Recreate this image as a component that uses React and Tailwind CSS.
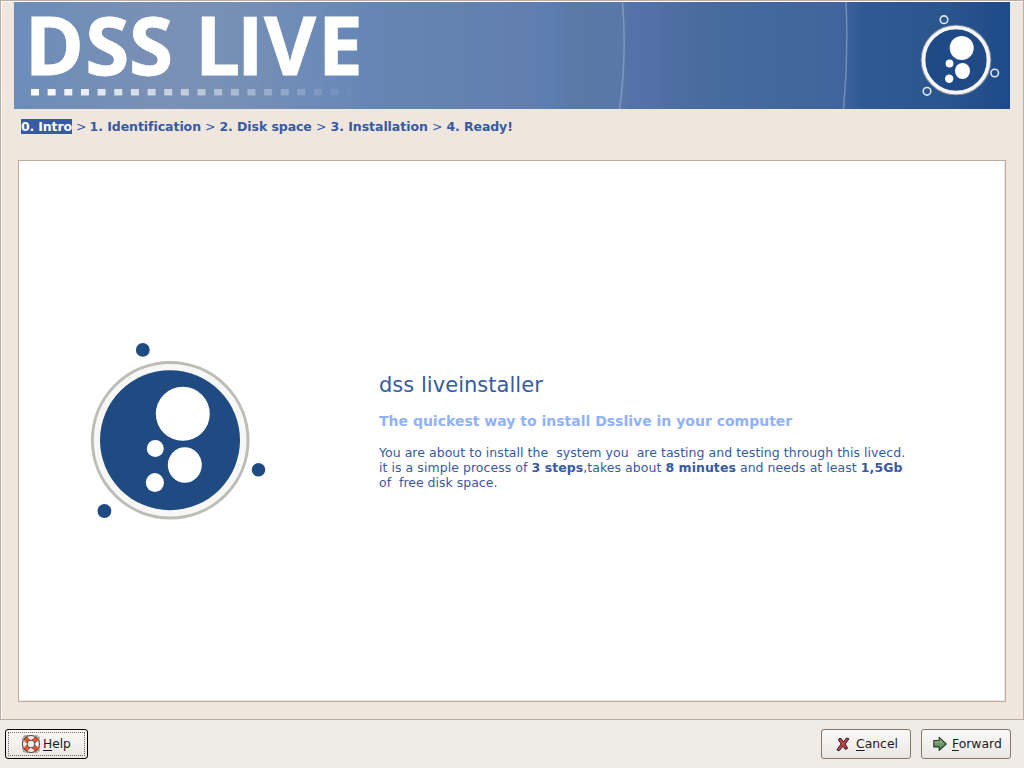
const squares = Array.from({ length: 20 }, (_, i) => i);

function Banner() {
  return (
    <svg className="block h-[107px] w-[996px] shrink-0 overflow-visible" viewBox="14 2 996 107">
      <defs>
        <linearGradient id="sky" gradientUnits="userSpaceOnUse" x1="14" y1="0" x2="1010" y2="0">
          <stop offset="0" stopColor="#6c8dba" />
          <stop offset="0.06" stopColor="#718eb7" />
          <stop offset="0.15" stopColor="#7b90b5" />
          <stop offset="0.22" stopColor="#7690b5" />
          <stop offset="0.31" stopColor="#6c8ab8" />
          <stop offset="0.36" stopColor="#6586b4" />
          <stop offset="0.42" stopColor="#6384af" />
          <stop offset="0.48" stopColor="#6280b0" />
          <stop offset="0.51" stopColor="#637eb0" />
          <stop offset="0.54" stopColor="#5b7eb1" />
          <stop offset="0.56" stopColor="#5979a6" />
          <stop offset="0.61" stopColor="#5878a8" />
          <stop offset="0.62" stopColor="#5272a9" />
          <stop offset="0.64" stopColor="#5271a8" />
          <stop offset="0.68" stopColor="#4a6c9e" />
          <stop offset="0.76" stopColor="#43689d" />
          <stop offset="0.83" stopColor="#42649c" />
          <stop offset="0.85" stopColor="#305a94" />
          <stop offset="0.93" stopColor="#2b558d" />
          <stop offset="1" stopColor="#1e4a8a" />
        </linearGradient>
      </defs>
      <rect x="14" y="2" width="996" height="107" fill="url(#sky)" />
      <g fill="none" stroke="#8495b8" strokeOpacity="0.16">
        <circle cx="176" cy="50" r="18" />
        <path d="M101 2A88 88 0 0 0 111 109M251 2A88 88 0 0 1 241 109" strokeWidth="2" />
        <path d="M317 2A148 148 0 0 1 311 109M35 2A148 148 0 0 0 41 109" strokeWidth="3" />
      </g>
      <path d="M622.5 2Q627 56 619.5 109M846 2Q848.5 56 843.5 109" fill="none" stroke="#a3b9db" strokeOpacity="0.5" strokeWidth="1.5" />
      <g fill="#fff" stroke="#fff" strokeWidth="0.8" fontSize="80" fontWeight="700" fontFamily="'Open Sans', 'Noto Sans', sans-serif">
        <text x="24.7 85.2 129" y="75.1">DSS</text>
        <text x="195 237 264 318" y="75.1">LIVE</text>
      </g>
      {squares.map((i) => (
        <rect key={i} x={31 + i * 16.65} y="89" width={i === 19 ? 4 : 8} height="6.5" fill="#fff" opacity={Math.max(0.04, 1 - i * 0.051)} />
      ))}
      <circle cx="956" cy="60" r="33" fill="#204a87" stroke="#8493aa" strokeWidth="4.6" />
      <circle cx="956" cy="60" r="32.5" fill="none" stroke="#f7f7fa" strokeWidth="3.5" />
      <g fill="#fff">
        <circle cx="961.7" cy="48" r="12" />
        <circle cx="949.5" cy="63.5" r="3.9" />
        <ellipse cx="962.5" cy="71" rx="7.5" ry="8" />
        <circle cx="949.2" cy="78.7" r="4.2" />
      </g>
      <g fill="none" stroke="#dce5f3" strokeWidth="1.6">
        <circle cx="944" cy="19.7" r="3.8" />
        <circle cx="994.7" cy="73" r="3.8" />
        <circle cx="927" cy="91.3" r="3.8" />
      </g>
    </svg>
  );
}

function Emblem() {
  return (
    <svg className="mt-[179px] ml-[71px] h-[180px] w-[180px] shrink-0" viewBox="90 340 180 180">
      <circle cx="170.2" cy="440.2" r="77.8" fill="#f7f7f7" stroke="#bcbdb7" strokeWidth="3" />
      <circle cx="170" cy="440.2" r="70" fill="#204a82" />
      <g fill="#fff">
        <circle cx="182.8" cy="413.8" r="27" />
        <circle cx="155.3" cy="448.5" r="8.5" />
        <ellipse cx="184.8" cy="465" rx="17" ry="17.8" />
        <ellipse cx="154.9" cy="482.6" rx="9.1" ry="9.5" />
      </g>
      <g fill="#204a82">
        <circle cx="142.8" cy="349.9" r="6.9" />
        <circle cx="258.5" cy="469.8" r="6.8" />
        <circle cx="104.4" cy="511" r="6.9" />
      </g>
    </svg>
  );
}

function LifebuoyIcon() {
  return (
    <svg className="h-5 w-5 shrink-0" viewBox="0 0 20 20">
      <rect x="1.8" y="1.8" width="16.4" height="16.4" rx="3" fill="#c9c7c3" stroke="#85827e" strokeWidth="1.2" strokeDasharray="2 1.2" />
      <circle cx="10" cy="10" r="8.4" fill="#f6f4f1" />
      <path d="M4 4l3.4 3.4M16 4l-3.4 3.4M4 16l3.4-3.4M16 16l-3.4-3.4" stroke="#e8512a" strokeWidth="5" />
      <circle cx="10" cy="10" r="8.5" fill="none" stroke="#4c4340" strokeWidth="1" />
      <circle cx="10" cy="10" r="3.9" fill="#efedeb" stroke="#4c4340" strokeWidth="1" />
    </svg>
  );
}

function CrossIcon() {
  return (
    <svg className="h-[15px] w-[14px] shrink-0" viewBox="0 0 14 15">
      <path d="M3 1.5l2.2.2L7.3 5l3.2-4 2.4.8-3.7 5.3 2.5 4.3-2.3 1L6.9 9.2l-3.8 4.6-2.2-1 4.2-5.9-2.6-4z" fill="#c7434a" stroke="#26191a" strokeWidth="1" strokeLinejoin="round" />
    </svg>
  );
}

function ArrowIcon() {
  return (
    <svg className="h-[16px] w-[15px] shrink-0" viewBox="0 0 15 16">
      <defs>
        <linearGradient id="leaf" x1="0" y1="0" x2="0" y2="1">
          <stop offset="0" stopColor="#9dbd99" />
          <stop offset="0.5" stopColor="#6f9d6a" />
          <stop offset="1" stopColor="#4f7d4d" />
        </linearGradient>
      </defs>
      <path d="M.8 4.5h5.4V1.4L13.2 8l-7 6.3v-3.4H.8z" fill="url(#leaf)" stroke="#263b2a" strokeWidth="1.1" strokeLinejoin="round" />
    </svg>
  );
}

function Button({ icon, label, className }) {
  return (
    <button className={`flex h-[30px] items-center rounded-[3px] border bg-linear-to-b from-[#fbfaf9] via-[#f3f1ef] to-[#e9e6e2] text-[#1a1a1a] ${className}`}>
      {icon}
      <span className="whitespace-pre">
        <span className="underline underline-offset-2">{label[0]}</span>
        {label.slice(1)}
      </span>
    </button>
  );
}

export default function App() {
  return (
    <div className="flex h-[768px] w-[1024px] flex-col overflow-hidden bg-[#efebe6] font-['DejaVu_Sans','Liberation_Sans',sans-serif]">
      <main className="flex h-[720px] flex-col border border-[#bcaca3] bg-[#efe6dd] pl-[12px] shadow-[inset_1px_1px_0_#fff]">
        <div className="flex pt-px pl-px">
          <Banner />
        </div>
        <nav className="mt-[10px] flex h-[15px] items-center pl-2 text-[12.5px] leading-[15px] font-bold whitespace-pre text-[#365aa4]">
          <span className="w-[51px] bg-[#365aa4] tracking-[-0.15px] text-white">0. Intro</span>
          <span className="w-[17.5px] pl-[4px] font-normal">&gt;</span>
          <span className="w-[111.5px] tracking-[-0.05px]">1. Identification</span>
          <span className="w-[18.5px] pl-[4px] font-normal">&gt;</span>
          <span className="w-[92.5px] tracking-[-0.08px]">2. Disk space</span>
          <span className="w-[18.5px] pl-[4px] font-normal">&gt;</span>
          <span className="w-[97.5px] tracking-[-0.04px]">3. Installation</span>
          <span className="w-[18.5px] pl-[4px] font-normal">&gt;</span>
          <span className="tracking-[-0.1px]">4. Ready!</span>
        </nav>
        <section className="mt-[26px] ml-[5px] flex h-[542px] w-[988px] border border-[#bcaca0] bg-white shadow-[inset_-1px_-1px_0_#efe6dd]">
          <Emblem />
          <div className="mt-[211px] ml-[109px] whitespace-pre text-[#365aa4]">
            <h1 className="text-[21px] leading-[26px] tracking-[0.03px]">dss liveinstaller</h1>
            <h2 className="mt-[13px] text-[14px] leading-[20px] font-bold text-[#91b2fa]">The quickest way to install Dsslive in your computer</h2>
            <div className="mt-[14px] text-[12.5px] leading-[15px]">
              <p className="tracking-[0.035px]">You are about to install the  system you  are tasting and testing through this livecd.</p>
              <p className="tracking-[0.05px]">it is a simple process of <b>3 steps</b>,takes about <b>8 minutes</b> and needs at least <b>1,5Gb</b></p>
              <p>of  free disk space.</p>
            </div>
          </div>
        </section>
      </main>
      <footer className="flex h-[48px] items-center pr-[13px] pl-[5px]">
        <Button className="w-[83px] gap-[2px] border-black pl-[15px] text-[12.2px] outline-1 -outline-offset-4 outline-dotted outline-[#77695a]" icon={<LifebuoyIcon />} label="Help" />
        <Button className="ml-auto w-[90px] gap-[6px] border-[#85756a] pl-[14px] text-[12.4px]" icon={<CrossIcon />} label="Cancel" />
        <Button className="ml-[10px] w-[90px] gap-[4px] border-[#85756a] pl-[11px] text-[12.4px]" icon={<ArrowIcon />} label="Forward" />
      </footer>
    </div>
  );
}
